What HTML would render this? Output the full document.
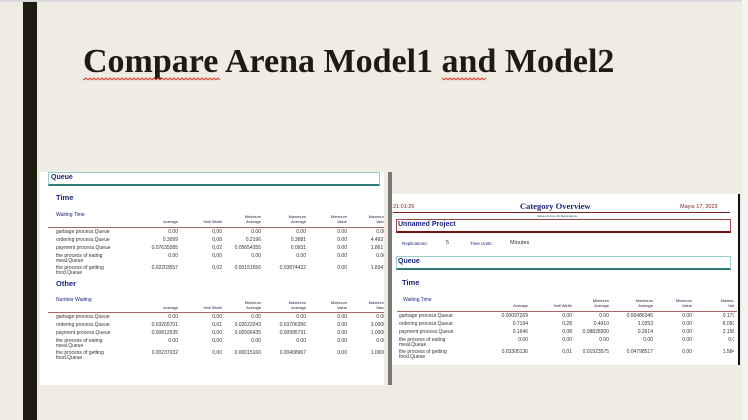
<!DOCTYPE html>
<html><head><meta charset="utf-8"><style>
*{margin:0;padding:0;box-sizing:border-box}
body{width:748px;height:420px;overflow:hidden;background:#efece4;position:relative;font-family:"Liberation Sans",sans-serif}
.a{position:absolute;white-space:nowrap}
.t{font-size:5px;color:#333;line-height:5px}
.r{text-align:right}
.h{font-size:4px;color:#224;text-align:right;line-height:5px}
.blue{color:#1a237e}
</style></head><body>
<div class="a" style="left:0;top:0;width:748px;height:2px;background:#d9d9d9"></div>
<div class="a" style="left:742px;top:0;width:6px;height:420px;background:#f4f4f2"></div>
<div class="a" style="left:23px;top:2px;width:14px;height:418px;background:#1c1c10"></div>
<div class="a" style="left:83px;top:42px;font-family:'Liberation Serif',serif;font-weight:bold;font-size:34px;color:#1c1c10;line-height:40px">Compare Arena Model1 and Model2</div>
<svg class="a" style="left:0;top:77px" width="748" height="6">
<defs><pattern id="sq" width="4" height="4" patternUnits="userSpaceOnUse"><path d="M0 3 L2 1 L4 3" stroke="#e0382c" fill="none" stroke-width="1"/></pattern></defs>
<rect x="83" y="0" width="137" height="4" fill="url(#sq)"/>
<rect x="442" y="0" width="44" height="4" fill="url(#sq)"/>
</svg>

<!-- left image -->
<div class="a" style="left:40px;top:172px;width:344px;height:213px;background:#fff"></div>
<div class="a" style="left:48px;top:172px;width:332px;height:14px;border:1px solid #9cc;border-bottom:2px solid #2e7d7a;background:#fff"></div>
<div class="a blue" style="left:51px;top:174px;font-size:7px;font-weight:bold">Queue</div>
<div class="a blue" style="left:56px;top:193px;font-size:7.5px;font-weight:bold">Time</div>
<div class="a blue" style="left:56px;top:212px;font-size:5px">Waiting Time</div>
<div class="a blue" style="left:56px;top:279px;font-size:7.5px;font-weight:bold">Other</div>
<div class="a blue" style="left:56px;top:297px;font-size:5px">Number Waiting</div>
<div class="a" style="left:48px;top:227px;width:336px;height:1px;background:#a66"></div>
<div class="a" style="left:48px;top:312px;width:336px;height:1px;background:#a66"></div>

<!-- right image -->
<div class="a" style="left:388px;top:172px;width:4px;height:213px;background:#777"></div>
<div class="a" style="left:392px;top:194px;width:348px;height:171px;background:#fff;border-right:2px solid #111"></div>
<div class="a" style="left:393px;top:204px;font-size:5.5px;color:#7a2020">21:01:26</div>
<div class="a" style="left:520px;top:201px;font-family:'Liberation Serif',serif;font-weight:bold;font-size:8.5px;color:#1a237e">Category Overview</div>
<div class="a" style="left:680px;top:204px;font-size:5.5px;color:#7a2020">Mayıs 17, 2023</div>
<div class="a" style="left:393px;top:212px;width:337px;height:1px;background:#7a2020"></div>
<div class="a" style="left:537px;top:214px;font-size:3px;color:#335">Values Across All Replications</div>
<div class="a" style="left:396px;top:219px;width:335px;height:14px;border:1px solid #9a4444;border-bottom:2px solid #7a1010"></div>
<div class="a blue" style="left:398px;top:221px;font-size:7px;font-weight:bold">Unnamed Project</div>
<div class="a blue" style="left:402px;top:241px;font-size:4.5px">Replications:</div>
<div class="a" style="left:446px;top:240px;font-size:5.5px;color:#333">5</div>
<div class="a blue" style="left:470px;top:241px;font-size:4.5px">Time Units:</div>
<div class="a" style="left:510px;top:240px;font-size:5.5px;color:#333">Minutes</div>
<div class="a" style="left:396px;top:256px;width:335px;height:14px;border:1px solid #9cc;border-bottom:2px solid #2e7d7a"></div>
<div class="a blue" style="left:398px;top:258px;font-size:7px;font-weight:bold">Queue</div>
<div class="a blue" style="left:402px;top:278px;font-size:7.5px;font-weight:bold">Time</div>
<div class="a blue" style="left:403px;top:297px;font-size:5px">Waiting Time</div>
<div class="a" style="left:397px;top:311px;width:340px;height:1px;background:#a66"></div>

<div id="L"></div>
<script>
function tbl(colsR, heady, rows, rowY, labx){
 var hd=[["Average"],["Half Width"],["Minimum","Average"],["Maximum","Average"],["Minimum","Value"],["Maximum","Value"]];
 var s='';
 for(var i=0;i<6;i++){var t=hd[i];
  if(t.length==1) s+='<div class="a h" style="right:'+(748-colsR[i])+'px;top:'+(heady+5)+'px">'+t[0]+'</div>';
  else s+='<div class="a h" style="right:'+(748-colsR[i])+'px;top:'+heady+'px">'+t[0]+'<br>'+t[1]+'</div>';}
 for(var r=0;r<rows.length;r++){var row=rows[r];
  s+='<div class="a t" style="left:'+labx+'px;top:'+rowY[r]+'px">'+row[0]+'</div>';
  for(var i=0;i<6;i++){ s+='<div class="a t r" style="right:'+(748-colsR[i])+'px;top:'+rowY[r]+'px">'+row[i+1]+'</div>';}
 }
 return s;
}
var L1=[["garbage process.Queue","0.00","0,00","0.00","0.00","0.00","0.00"],
["ordering process.Queue","0.3099","0,08","0.2196","0.3681","0.00","4.4937"],
["payment process.Queue","0.07635585","0,02","0.05654355","0.0931","0.00","1.8617"],
["the process of eating<br>meal.Queue","0.00","0,00","0.00","0.00","0.00","0.00"],
["the process of getting<br>food.Queue","0.02203557","0,02","0.00151656","0.03874422","0.00","1.8347"]];
var L2=[["garbage process.Queue","0.00","0,00","0.00","0.00","0.00","0.00"],
["ordering process.Queue","0.03265701","0,01","0.02623243","0.03706356","0.00","3.0000"],
["payment process.Queue","0.00812535","0,00","0.00566435","0.00995731","0.00","1.0000"],
["the process of eating<br>meal.Queue","0.00","0,00","0.00","0.00","0.00","0.00"],
["the process of getting<br>food.Queue","0.00237032","0,00","0.00015166","0.00408967","0.00","1.0000"]];
var R=[["garbage process.Queue","0.00097269","0,00","0.00","0.00486346","0.00","0.1773"],
["ordering process.Queue","0.7194","0,28","0.4910","1.0253","0.00","8.0937"],
["payment process.Queue","0.1646","0,08","0.08828300","0.2614","0.00","2.1580"],
["the process of eating<br>meal.Queue","0.00","0,00","0.00","0.00","0.00","0.00"],
["the process of getting<br>food.Queue","0.03305136","0,01","0.01923575","0.04798517","0.00","1.5846"]];
var html='<div class="a" style="left:0;top:0;width:748px;height:420px;clip-path:inset(0 364px 0 0)">'+
 tbl([178,222,261,306,347,386],214,L1,[230,238,246,254,266],56)+
 tbl([178,222,261,306,347,386],300,L2,[315,323,331,339,351],56)+'</div>'+
 '<div class="a" style="left:0;top:0;width:748px;height:420px;clip-path:inset(0 14px 55px 0)">'+
 tbl([528,572,609,653,692,738],298,R,[314,322,330,338,350],399)+'</div>';
document.getElementById('L').innerHTML=html;
</script>
</body></html>
